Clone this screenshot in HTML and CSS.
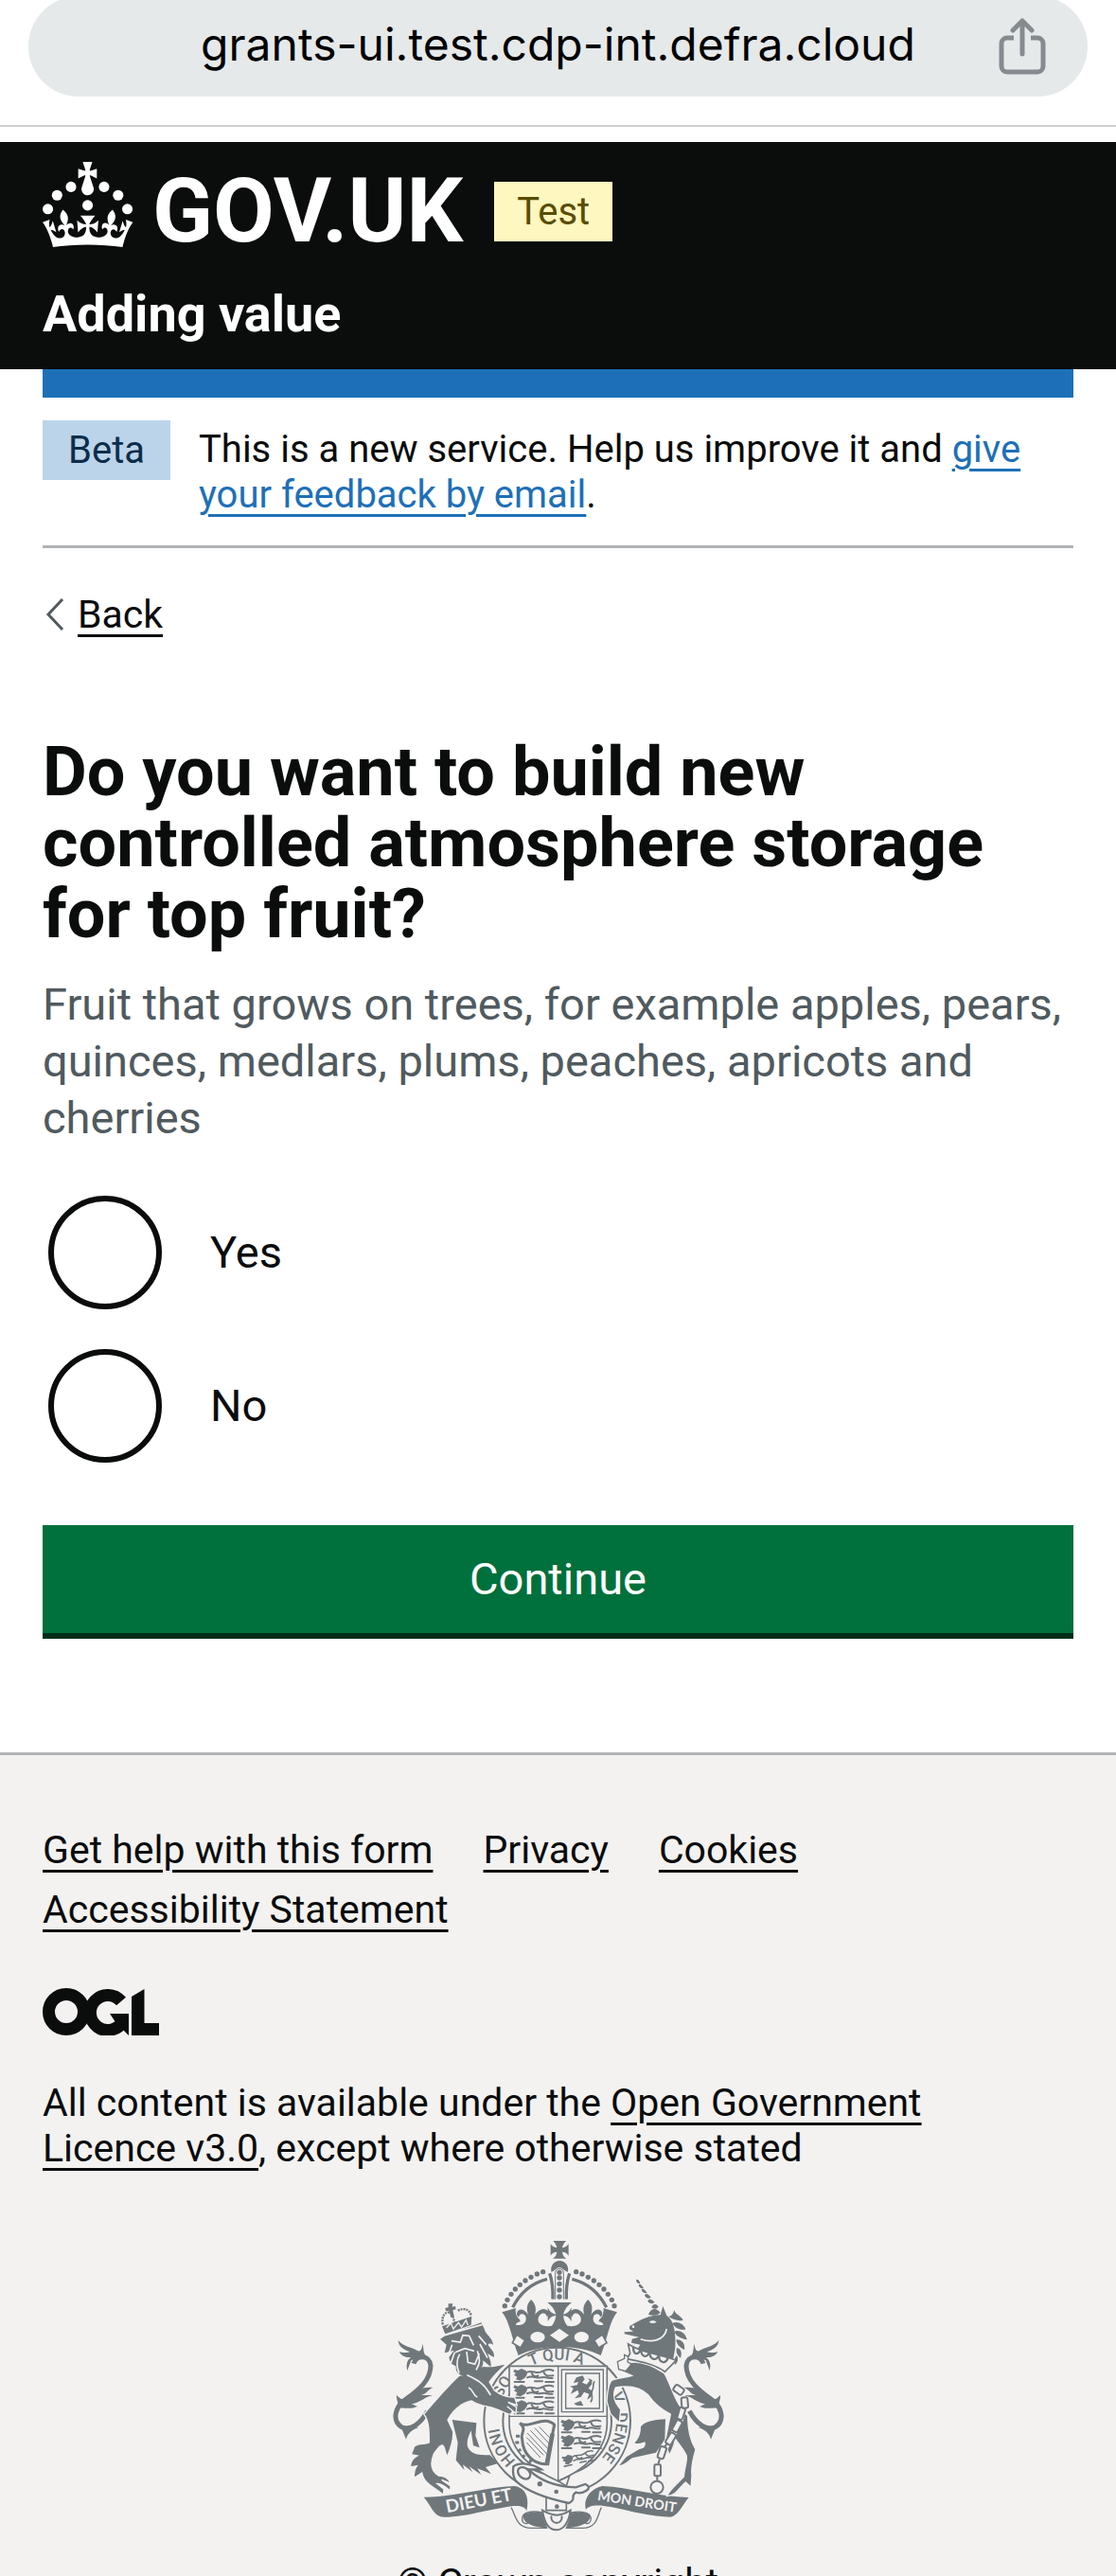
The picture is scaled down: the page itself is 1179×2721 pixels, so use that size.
FILE: index.html
```html
<!DOCTYPE html>
<html lang="en">
<head>
<meta charset="utf-8">
<meta name="viewport" content="width=device-width, initial-scale=1">
<title>Do you want to build new controlled atmosphere storage for top fruit?</title>
<link rel="stylesheet" href="styles.css">
</head>
<body>
<div class="browser-bar">
  <div class="address">
    <span class="address-text">grants-ui.test.cdp-int.defra.cloud</span>
    <button class="share" type="button" aria-label="Share">
      <svg viewBox="0 0 50 60" width="50" height="60" fill="none" stroke="currentColor" stroke-width="5" stroke-linecap="round" stroke-linejoin="round">
        <path d="M16 21H9a6 6 0 0 0-6 6v24a6 6 0 0 0 6 6h32a6 6 0 0 0 6-6V27a6 6 0 0 0-6-6h-7" stroke-linecap="butt"/>
        <path d="M25 38V4M15 13L25 3l10 10"/>
      </svg>
    </button>
  </div>
</div>

<header class="header">
  <div class="brand">
    <a class="logo" href="#">
      <svg class="crown" viewBox="0 0 64 60" width="96" height="90" fill="currentColor" aria-hidden="true">
        <circle cx="20" cy="17.6" r="3.7"/><circle cx="10.2" cy="23.5" r="3.7"/><circle cx="3.7" cy="33.2" r="3.7"/><circle cx="31.7" cy="30.6" r="3.7"/><circle cx="43.3" cy="17.6" r="3.7"/><circle cx="53.2" cy="23.5" r="3.7"/><circle cx="59.7" cy="33.2" r="3.7"/>
        <path d="M33.1,9.8c.2-.1.3-.3.5-.5l4.6,2.4v-6.8l-4.6,1.5c-.1-.2-.3-.3-.5-.5l1.9-5.9h-6.7l1.9,5.9c-.2.1-.3.3-.5.5l-4.6-1.5v6.8l4.6-2.4c.1.2.3.3.5.5l-2.6,8c-.9,2.8,1.2,5.7,4.1,5.7h0c3,0,5.1-2.9,4.1-5.7l-2.6-8ZM37,37.9s-3.4,3.8-4.1,6.1c2.2,0,4.2-.5,6.4-2.8l-.7,8.5c-2-2.8-4.4-4.1-5.7-3.8.1,3.1.5,6.7,5.8,7.2,3.7.3,6.7-1.5,7-3.8.4-2.6-2-4.3-3.7-1.6-1.4-4.5,2.4-6.1,4.9-3.2-1.9-4.5-1.8-7.7,2.4-10.9,3,4,2.6,7.3-1.2,11.1,2.4-1.3,6.2,0,4,4.6-1.2-2.8-3.7-2.2-4.2.2-.3,1.7.7,3.7,3,4.2,1.9.3,4.7-.9,7-5.9-1.3,0-2.4.7-3.9,1.7l2.4-8c.6,2.3,1.4,3.7,2.2,4.5.6-1.6.5-2.8,0-5.3l5,1.8c-2.6,3.6-5.2,8.7-7.3,17.5-7.4-1.1-15.7-1.7-24.5-1.7h0c-8.8,0-17.1.6-24.5,1.7-2.1-8.9-4.7-13.9-7.3-17.5l5-1.8c-.5,2.5-.6,3.7,0,5.3.8-.8,1.6-2.3,2.2-4.5l2.4,8c-1.5-1-2.6-1.7-3.9-1.7,2.3,5,5.2,6.2,7,5.9,2.3-.4,3.3-2.4,3-4.2-.5-2.4-3-3.1-4.2-.2-2.2-4.6,1.6-6,4-4.6-3.7-3.7-4.2-7.1-1.2-11.1,4.2,3.2,4.3,6.4,2.4,10.9,2.5-2.8,6.3-1.3,4.9,3.2-1.8-2.7-4.1-1-3.7,1.6.3,2.3,3.3,4.1,7,3.8,5.4-.5,5.7-4.2,5.8-7.2-1.3-.2-3.7,1-5.7,3.8l-.7-8.5c2.2,2.3,4.2,2.7,6.4,2.8-.7-2.3-4.1-6.1-4.1-6.1h10.6,0Z"/>
      </svg>
      <span class="wordmark">GOV.UK</span>
    </a>
    <strong class="tag tag-yellow">Test</strong>
  </div>
  <a class="service-name" href="#">Adding value</a>
</header>

<div class="container">
  <div class="blue-bar"></div>
  <div class="phase-banner">
    <strong class="tag tag-blue">Beta</strong>
    <p class="phase-text">This is a new service. Help us improve it and <a class="link" href="#">give your feedback by email</a>.</p>
  </div>
  <a class="back" href="#">
    <svg class="back-icon" viewBox="0 0 20 34" width="20" height="34" fill="none" stroke="#505a5f" stroke-width="3" aria-hidden="true"><path d="M18 1L3 17l15 16"/></svg>
    <span class="back-text">Back</span>
  </a>
  <main>
    <form class="question">
      <fieldset class="fieldset" aria-describedby="hint">
        <legend class="legend"><h1 class="heading">Do you want to build new controlled atmosphere storage for top fruit?</h1></legend>
        <p class="hint" id="hint">Fruit that grows on trees, for example apples, pears, quinces, medlars, plums, peaches, apricots and cherries</p>
        <div class="radios">
          <div class="radio"><input class="radio-input" type="radio" name="storage" id="yes" value="yes"><label class="radio-label" for="yes">Yes</label></div>
          <div class="radio"><input class="radio-input" type="radio" name="storage" id="no" value="no"><label class="radio-label" for="no">No</label></div>
        </div>
      </fieldset>
      <button class="button" type="submit">Continue</button>
    </form>
  </main>
</div>

<footer class="footer">
  <ul class="footer-links">
    <li><a class="link" href="#">Get help with this form</a></li>
    <li><a class="link" href="#">Privacy</a></li>
    <li><a class="link" href="#">Cookies</a></li>
    <li><a class="link" href="#">Accessibility Statement</a></li>
  </ul>
  <svg class="ogl" viewBox="0 0 123 50" width="123" height="50" fill="none" stroke="#0b0c0c" stroke-width="13" role="img" aria-label="Open Government Licence">
    <circle cx="25" cy="25" r="18.5"/>
    <path d="M83 14A18.500 18.500 0 1 0 85 35"/>
    <path d="M71 27h20v23l-6-6-6 2-2-10z" fill="#0b0c0c" stroke="none"/>
    <path d="M94 9L107.500 1v36H123v13H94z" fill="#0b0c0c" stroke="none"/>
  </svg>
  <p class="licence">All content is available under the <a class="link" href="#">Open Government Licence v3.0</a>, except where otherwise stated</p>
  <a class="copyright" href="#">
    <svg class="arms" viewBox="50 45 1050 930" width="350" height="310" fill="#6f777b" stroke="none" aria-hidden="true">
      <defs>
        <path id="ring" d="M571 802A187 187 0 1 1 572 802"/>
        <g id="passant">
          <path d="M6 4l10 4 12-6 14 6 4 12-8 12-14 8-14-4 4-8-10-6 6-6-8-4z"/>
          <path d="M44 14c16-10 30 6 46-2 12-6 24-10 38-4M46 30c18-8 28 4 44 0 14-4 22 4 36 2M60 16c4 12 14 12 20 8M98 12c4 14 14 14 30 12M6 44h30M70 42h24M104 44h26" fill="none" stroke="#6f777b" stroke-width="6" stroke-linecap="round"/>
        </g>
        <g id="crown-half">
          <path d="M580 321C560 316 532 330 515 312C507 303 510 286 523 281C533 279 538 286 538 292C545 286 546 276 538 270C524 262 511 271 501 284C506 262 501 250 488 237C476 250 472 263 479 285C470 270 455 264 447 272C440 281 443 290 450 292C451 282 462 279 470 288C478 306 463 323 440 317C437 311 444 305 454 302C442 292 436 279 440 264L396 277C420 305 428 365 448 414C482 396 530 387 580 387Z"/>
          <path d="M444 268C434 284 440 300 456 306C444 308 438 314 436 324L424 300Z"/>
          <path d="M429 374l14-26 26 18-14 24z" fill="#f3f2f1" stroke="#6f777b" stroke-width="5"/>
          <ellipse cx="509" cy="356" rx="23" ry="17" fill="#f3f2f1"/>
          <path d="M430 262C455 212 492 184 539 172M547 154C556 180 558 208 557 236" fill="none" stroke="#6f777b" stroke-width="10"/>
          <circle cx="405" cy="257" r="8"/><circle cx="413" cy="238" r="8"/><circle cx="425" cy="220" r="8"/><circle cx="438" cy="204" r="8"/><circle cx="453" cy="190" r="8"/><circle cx="470" cy="177" r="8"/><circle cx="488" cy="166" r="8"/><circle cx="507" cy="156" r="8"/><circle cx="526" cy="149" r="8"/>
        </g>
        <g id="tail">
          <path d="M160 590C138 632 104 655 76 640C46 618 58 574 92 552C132 524 170 492 170 446C166 410 124 412 116 440" fill="none" stroke="#6f777b" stroke-width="15"/>
          <path d="M67 366C82 386 112 388 130 400C142 402 142 386 145 378C148 392 146 400 152 412L172 440L140 416L108 430L96 462C90 440 98 426 108 420C90 422 76 414 70 402C80 406 96 406 104 402C84 396 68 386 67 366Z"/>
          <path d="M62 540C74 552 82 560 100 548C126 520 150 512 178 516C160 522 158 536 140 540L176 540C150 546 140 562 110 568L128 576C100 588 80 574 64 584C72 566 60 556 62 540ZM74 636L92 680C96 662 110 650 132 642Z"/>
        </g>
      </defs>

      <!-- crown -->
      <use href="#crown-half"/>
      <use href="#crown-half" transform="translate(1157 0) scale(-1 1)"/>
      <path d="M540 246H617C604 256 594 268 590 284C602 282 611 274 616 262V306C610 294 602 288 590 288C592 304 598 316 608 326H549C559 316 565 304 567 288C555 288 547 294 541 306V262C546 274 555 282 567 284C563 268 553 256 540 246Z"/>
      <path d="M558 51H599C591 60 588 66 587 73C596 72 602 68 607 61V98C602 90 596 86 587 86C588 94 591 102 600 107H557C566 102 569 94 570 86C561 86 555 90 550 98V61C555 68 561 72 570 73C569 66 566 60 558 51Z"/>
      <path d="M553 150A27 27 0 1 1 604 150L590 142A14 14 0 0 0 566 142Z"/>
      <path d="M565 236V152a13 13 0 0 1 26 0v84" fill="#f3f2f1" stroke="#6f777b" stroke-width="3"/>
      <circle cx="578" cy="151" r="8"/><circle cx="578" cy="168" r="8"/><circle cx="578" cy="187" r="8"/><circle cx="578" cy="207" r="8"/><circle cx="578" cy="228" r="8"/>
      <path d="M548 350l30-21 30 21-30 21z" fill="#f3f2f1"/>

      <!-- tails -->
      <use href="#tail"/>
      <use href="#tail" transform="translate(1150 0) scale(-1 1)"/>

      <!-- garter -->
      <circle cx="571" cy="621" r="232" fill="#f3f2f1" stroke="#6f777b" stroke-width="6"/>
      <circle cx="571" cy="621" r="172" fill="none" stroke="#6f777b" stroke-width="6"/>
      <g class="motto">
        <text><textPath href="#ring" startOffset="145">HONI</textPath></text>
        <text><textPath href="#ring" startOffset="360">SO</textPath></text>
        <text><textPath href="#ring" startOffset="500">T QUI A</textPath></text>
        <text><textPath href="#ring" startOffset="800">V</textPath></text>
        <text><textPath href="#ring" startOffset="860">DENSE</textPath></text>
      </g>

      <!-- shield -->
      <path d="M419 448H729V630C728 720 650 780 574 812C498 780 420 720 419 630Z" fill="#f3f2f1" stroke="#6f777b" stroke-width="5"/>
      <path d="M574 448V812M419 607H729" stroke="#6f777b" stroke-width="4"/>
      <use href="#passant" x="430" y="454"/><use href="#passant" x="430" y="504"/><use href="#passant" x="430" y="554"/>
      <use href="#passant" x="580" y="614"/><use href="#passant" x="580" y="664"/>
      <use href="#passant" transform="translate(582 732) rotate(-12) scale(.8)"/>
      <path d="M585 459H717V593H585ZM598 471H705V582H598Z" fill="none" stroke="#6f777b" stroke-width="4"/>
      <path d="M632 484l20-6 6 12-8 10 14 6 10-12-6-8 14 6-2 14-10 12 14 10-6 18-12 8 6-18-16-6-10 16-20 4 14-14-4-12-22 12 8-18-10-6 22-4 4-10-16 4zM624 566l22-8 8 16-22-2z"/>
      <path d="M676 562c14-12-2-28 6-38s-2-20 8-28" fill="none" stroke="#6f777b" stroke-width="5"/>
      <g fill="none" stroke="#6f777b">
        <path d="M452 628C480 650 530 600 562 634L536 758C500 760 462 730 460 680C452 660 478 650 452 628" stroke-width="9"/>
        <path d="M556 662L538 762" stroke-width="14"/>
        <path d="M476 660l62 66M474 674l54 56M474 690l44 48M486 652l56 58M500 644l46 50M514 640l36 38" stroke-width="3"/>
        <path d="M452 670h-12M450 690h-12M456 712l-10 6M468 730l-8 8M488 744l-4 10" stroke-width="9"/>
      </g>

      <!-- buckle and strap -->
      <path d="M536 860V905H600V860" fill="#f3f2f1" stroke="#6f777b" stroke-width="5"/>
      <path d="M524 905C560 925 580 925 613 905C608 945 590 967 568 967C546 967 530 945 524 905Z" fill="#f3f2f1" stroke="#6f777b" stroke-width="6"/>
      <path d="M553 922a17 17 0 1 0 32 0" fill="none" stroke="#6f777b" stroke-width="6"/>
      <path d="M432 766C450 752 490 755 520 775L480 775C520 815 570 830 630 832L660 822C690 835 650 855 630 848C610 860 635 868 608 882C560 872 480 850 440 812C432 800 430 780 432 766Z" fill="#f3f2f1" stroke="#6f777b" stroke-width="7"/>
      <path d="M574 812L610 795L600 828Z" fill="none" stroke="#6f777b" stroke-width="5"/>
      <ellipse cx="466" cy="787" rx="22" ry="16" transform="rotate(40 466 787)" fill="none" stroke="#6f777b" stroke-width="7"/>
      <circle cx="516" cy="821" r="8"/><circle cx="568" cy="846" r="7"/><circle cx="570" cy="893" r="7"/>

      <!-- ribbon -->
      <path d="M148 863C250 862 340 832 437 828C468 834 484 860 474 906C466 888 440 888 400 896C330 908 270 926 212 926C180 926 172 890 148 863Z"/>
      <path d="M988 864C890 862 800 832 714 828C684 834 652 862 662 902C672 888 700 886 740 894C800 906 870 926 930 926C956 922 966 890 988 864Z"/>
      <path d="M425 896C440 920 440 962 490 961H538C532 945 528 925 524 912C490 905 462 910 460 930C458 945 470 948 478 946M711 896C698 920 700 962 650 961H600C608 945 614 925 616 912C646 905 676 912 678 930C678 945 670 948 660 946" stroke="#6f777b" stroke-width="4" fill="none"/>
      <path d="M462 922C474 908 508 910 524 914L536 961C500 958 464 950 462 922ZM676 922C664 908 632 910 616 914L602 961C636 958 676 950 676 922Z"/>
      <g class="scroll-text">
        <text transform="translate(222 913) rotate(-11)">DIEU ET</text>
        <text class="scroll-small" transform="translate(697 872) rotate(9)">MON DROIT</text>
      </g>

      <!-- lion -->
      <path d="M262 476C230 505 182 560 148 600C165 620 165 655 165 690C150 698 135 690 118 702L108 728L128 732C112 740 106 752 105 768L126 764C116 778 116 790 118 802L142 786C145 800 150 810 160 818C175 832 190 838 210 856L212 838L190 820C205 820 218 830 232 843L233 828L205 808L234 820C228 805 215 795 195 795C170 780 168 755 180 726C196 704 206 690 212 704L222 736C235 705 243 680 241 655L224 618C240 590 265 565 300 558C330 580 350 570 380 585C400 592 420 604 424 600L430 590L412 575L440 598L442 578L415 562L444 572L436 546C405 548 385 535 372 525L356 498C372 474 386 462 412 440L370 448C345 452 330 442 322 455L290 478Z" stroke="#f3f2f1" stroke-width="4"/>
      <path d="M238 618L315 628L312 668L325 706L305 700L298 652C284 680 282 700 292 712C310 735 340 728 358 730L384 756L344 768L362 790L318 772L330 792L292 766L303 784L272 760L277 778L250 746L256 690Z"/>
      <path d="M216 352L330 310L340 330C344 350 366 356 368 380C360 376 352 374 352 382C362 395 374 404 370 420L350 408C356 424 364 434 360 450L336 430C338 455 322 458 312 470C300 478 286 480 280 482C256 475 248 464 250 448C240 444 232 440 228 420L244 398L214 406L220 380L200 362Z"/>
      <path d="M236 368l28 4 8-22 20 2 14 30M248 404l30-12 30 8M284 402l4 34 22 6 14-34M262 410c-12 20-10 40-2 60M322 352l24 28M326 378l24 44M318 400c10 30 8 40-4 60M238 380l-14 38M246 404l-12 34M214 350l120-34" fill="none" stroke="#f3f2f1" stroke-width="5"/>
      <path d="M206 322L300 290L298 318L216 346Z"/>
      <path d="M220 326l14-14 8 18 16-20 10 14 14-22 6 16" fill="none" stroke="#f3f2f1" stroke-width="4"/>
      <path d="M226 250h14l-2 10 10-2 2 10-10 2 4 20-10 4-6-22-10 2-2-10 10-2z"/>
      <path d="M208 316C204 290 214 276 230 278M256 272C276 262 292 268 298 286M240 290l6 20" fill="none" stroke="#6f777b" stroke-width="7" stroke-dasharray="6 3"/>
      <path d="M285 476C315 490 338 500 360 540M290 516c18 8 10 22 28 30" fill="none" stroke="#f3f2f1" stroke-width="5"/>

      <!-- unicorn -->
      <path d="M800 436C840 430 880 450 910 470C930 500 940 560 985 606C985 640 990 680 1010 712C1000 745 995 770 998 795L995 832L978 816C960 830 950 858 918 860C930 835 955 818 972 798C975 765 985 745 980 730C965 700 950 690 944 676C945 700 935 712 926 730C920 712 915 700 914 682L930 600C910 590 880 570 860 540C830 510 790 510 756 516C745 540 750 560 772 585L768 628L740 600L728 560C730 530 735 500 745 492C770 484 790 484 808 478L780 466L760 440Z" stroke="#f3f2f1" stroke-width="4"/>
      <path d="M914 616C890 618 850 620 836 640C836 665 828 680 816 692C835 696 840 690 850 688C852 705 845 708 830 712L790 736L768 762C790 760 800 740 812 738L884 722L912 680Z"/>
      <path d="M800 322L816 312C850 292 880 286 898 286L906 258L918 288C940 300 948 340 945 390L938 430C915 430 870 410 822 398L834 380L806 374L808 362L830 356L784 346V340L812 338L800 330Z"/>
      <path d="M835 362C870 374 910 368 918 330" fill="none" stroke="#f3f2f1" stroke-width="5"/>
      <path d="M862 308q12-8 24 0q-12 8-24 0z" fill="#f3f2f1"/>
      <circle cx="812" cy="323" r="4" fill="#f3f2f1"/>
      <path d="M924 290C936 290 938 280 942 270C944 284 964 288 970 302C956 306 940 302 926 292ZM936 312C950 304 974 314 978 332C960 334 944 328 936 312ZM942 338C958 330 980 344 982 364C964 360 948 354 942 338ZM948 364C964 362 978 376 974 396C962 390 950 382 948 364ZM950 390C962 392 968 404 962 422C952 414 946 404 950 390ZM950 414C956 424 954 436 944 444C942 432 942 422 950 414Z"/>
      <path d="M860 284C868 262 886 262 898 278C890 288 872 290 860 284ZM870 262C874 250 886 248 892 260C886 268 876 268 870 262ZM858 242C862 232 872 236 880 246C872 252 862 250 858 242ZM848 224C852 214 860 220 868 230C862 236 852 232 848 224ZM838 207C840 198 850 206 856 216C850 219 842 215 838 207ZM829 192C831 184 839 190 845 201C839 204 832 200 829 192ZM821 176C823 170 831 176 834 185C828 188 823 184 821 176Z"/>
      <path d="M796 378C840 408 900 410 948 430L912 466C880 440 830 434 792 424L802 408Z" fill="#f3f2f1" stroke="#6f777b" stroke-width="5"/>
      <path d="M812 388c0 30 20 24 24 2 0 34 24 34 28 8-2 34 26 36 30 10-4 32 24 36 28 12" fill="none" stroke="#6f777b" stroke-width="7"/>
      <path d="M762 434l22-10v-12l12 6-2 16 12 8-18 22-22-6z" fill="#f3f2f1" stroke="#6f777b" stroke-width="4"/>
      <path d="M946 512L978 560L958 630L930 678L904 722L888 785" fill="none" stroke="#f3f2f1" stroke-width="18"/>
      <g fill="none" stroke="#6f777b" stroke-width="6">
        <rect x="940" y="512" width="32" height="22" rx="6" transform="rotate(35 956 523)"/>
        <rect x="958" y="554" width="34" height="20" rx="6" transform="rotate(85 975 564)"/>
        <rect x="944" y="588" width="38" height="20" rx="6" transform="rotate(108 963 598)"/>
        <rect x="932" y="628" width="38" height="20" rx="6" transform="rotate(118 951 638)"/>
        <rect x="912" y="668" width="38" height="20" rx="6" transform="rotate(122 931 678)"/>
        <rect x="884" y="712" width="38" height="20" rx="6" transform="rotate(108 903 722)"/>
        <rect x="879" y="760" width="20" height="36" rx="4"/>
        <path d="M919 694l-8 10M896 742l-5 16M888 796v14"/>
        <circle cx="887" cy="832" r="20"/>
      </g>
    </svg>
    <span class="copyright-text">© Crown copyright</span>
  </a>
</footer>
</body>
</html>
```
FILE: styles.css
```css
* {
  box-sizing: border-box;
}

body {
  margin: 0;
  height: 100vh;
  overflow: hidden;
  background: #fff;
  color: #0b0c0c;
  font-family: Roboto, "Liberation Sans", sans-serif;
  font-size: 41px;
  line-height: 48px;
}

p,
h1,
ul,
fieldset,
legend {
  margin: 0;
  padding: 0;
  border: 0;
}

a {
  color: inherit;
}

.browser-bar {
  padding: 0 30px 30px;
  border-bottom: 2px solid #cdcfd0;
  margin-bottom: 16px;
}

.address {
  display: grid;
  grid-template-columns: 1fr auto 1fr;
  align-items: center;
  height: 106px;
  margin-top: -4px;
  padding-right: 44px;
  padding-left: 44px;
  border-radius: 53px;
  background: #e5e9ea;
  color: #000;
}

.address-text {
  grid-column: 2;
  padding-bottom: 4px;
  font-family: Inter, sans-serif;
  font-size: 48px;
}

.share {
  display: flex;
  justify-self: end;
  padding: 0;
  border: 0;
  background: none;
  color: #868b8f;
}

.header {
  padding: 21px 45px 21px;
  background: #0b0c0c;
  color: #fff;
}

.brand {
  display: flex;
  align-items: flex-end;
  gap: 33px;
  height: 90px;
}

.logo {
  display: flex;
  align-items: flex-end;
  gap: 20px;
  color: #fff;
  text-decoration: none;
}

.wordmark {
  font-size: 94px;
  font-weight: 700;
  line-height: 76px;
}

.crown {
  display: block;
}

.tag {
  flex: none;
  height: 63px;
  padding: 0 24px;
  font-size: 40px;
  font-weight: 400;
  line-height: 63px;
}

.tag-yellow {
  margin-bottom: 6px;
  background: #fff7bf;
  color: #594d00;
}

.tag-blue {
  padding: 0 27px;
  background: #bbd4ea;
  color: #0c2d4a;
}

.service-name {
  display: block;
  margin-top: 33px;
  color: #fff;
  font-size: 54px;
  font-weight: 700;
  line-height: 75px;
  text-decoration: none;
}

.container {
  padding: 0 45px;
}

.blue-bar {
  height: 30px;
  background: #1d70b8;
}

.phase-banner {
  display: flex;
  align-items: flex-start;
  gap: 30px;
  padding: 24px 0 29px;
  border-bottom: 3px solid #b1b4b6;
}

.phase-text {
  padding-top: 7px;
  font-size: 40px;
}

.link,
.back-text {
  text-decoration: underline;
  text-decoration-thickness: 3px;
  text-underline-offset: 7px;
}

.phase-text .link {
  color: #1d70b8;
}

.back {
  display: inline-flex;
  align-items: center;
  gap: 14px;
  margin-top: 46px;
  text-decoration: none;
}

.back-icon {
  margin-left: 3px;
}

.heading {
  margin-top: 102px;
  font-size: 72px;
  font-weight: 700;
  line-height: 75px;
}

.hint {
  margin-top: 28px;
  color: #505a5f;
  font-size: 47px;
  line-height: 60px;
}

.radios {
  display: grid;
  gap: 42px;
  margin: 52px 0 66px 6px;
}

.radio {
  display: flex;
  align-items: center;
  gap: 51px;
}

.radio-input {
  appearance: none;
  width: 120px;
  height: 120px;
  margin: 0;
  border: 6px solid #0b0c0c;
  border-radius: 50%;
}

.radio-input:checked {
  background: radial-gradient(#0b0c0c 30px, #fff 31px);
}

.radio-label {
  font-size: 47px;
  line-height: 60px;
}

.button {
  display: block;
  width: 100%;
  height: 114px;
  padding: 0;
  border: 0;
  background: #00703c;
  box-shadow: 0 6px 0 #002d18;
  color: #fff;
  font-family: inherit;
  font-size: 47px;
  line-height: 60px;
}

.footer {
  margin-top: 126px;
  padding: 76px 45px 75px;
  border-top: 3px solid #b1b4b6;
  background: #f3f2f1;
}

.footer-links {
  display: flex;
  flex-wrap: wrap;
  gap: 15px 53px;
  list-style: none;
}

.ogl {
  display: block;
  margin: 59px 0 47px;
}

.licence {
  max-width: 1020px;
}

.copyright {
  display: flex;
  flex-direction: column;
  align-items: center;
  gap: 29px;
  margin-top: 72px;
  text-decoration: none;
}

.motto {
  font-size: 50px;
  font-weight: 500;
}

.scroll-text {
  fill: #f3f2f1;
  font-family: Lato, sans-serif;
  font-size: 56px;
  font-weight: 700;
}

.scroll-small {
  font-size: 43px;
}
```
